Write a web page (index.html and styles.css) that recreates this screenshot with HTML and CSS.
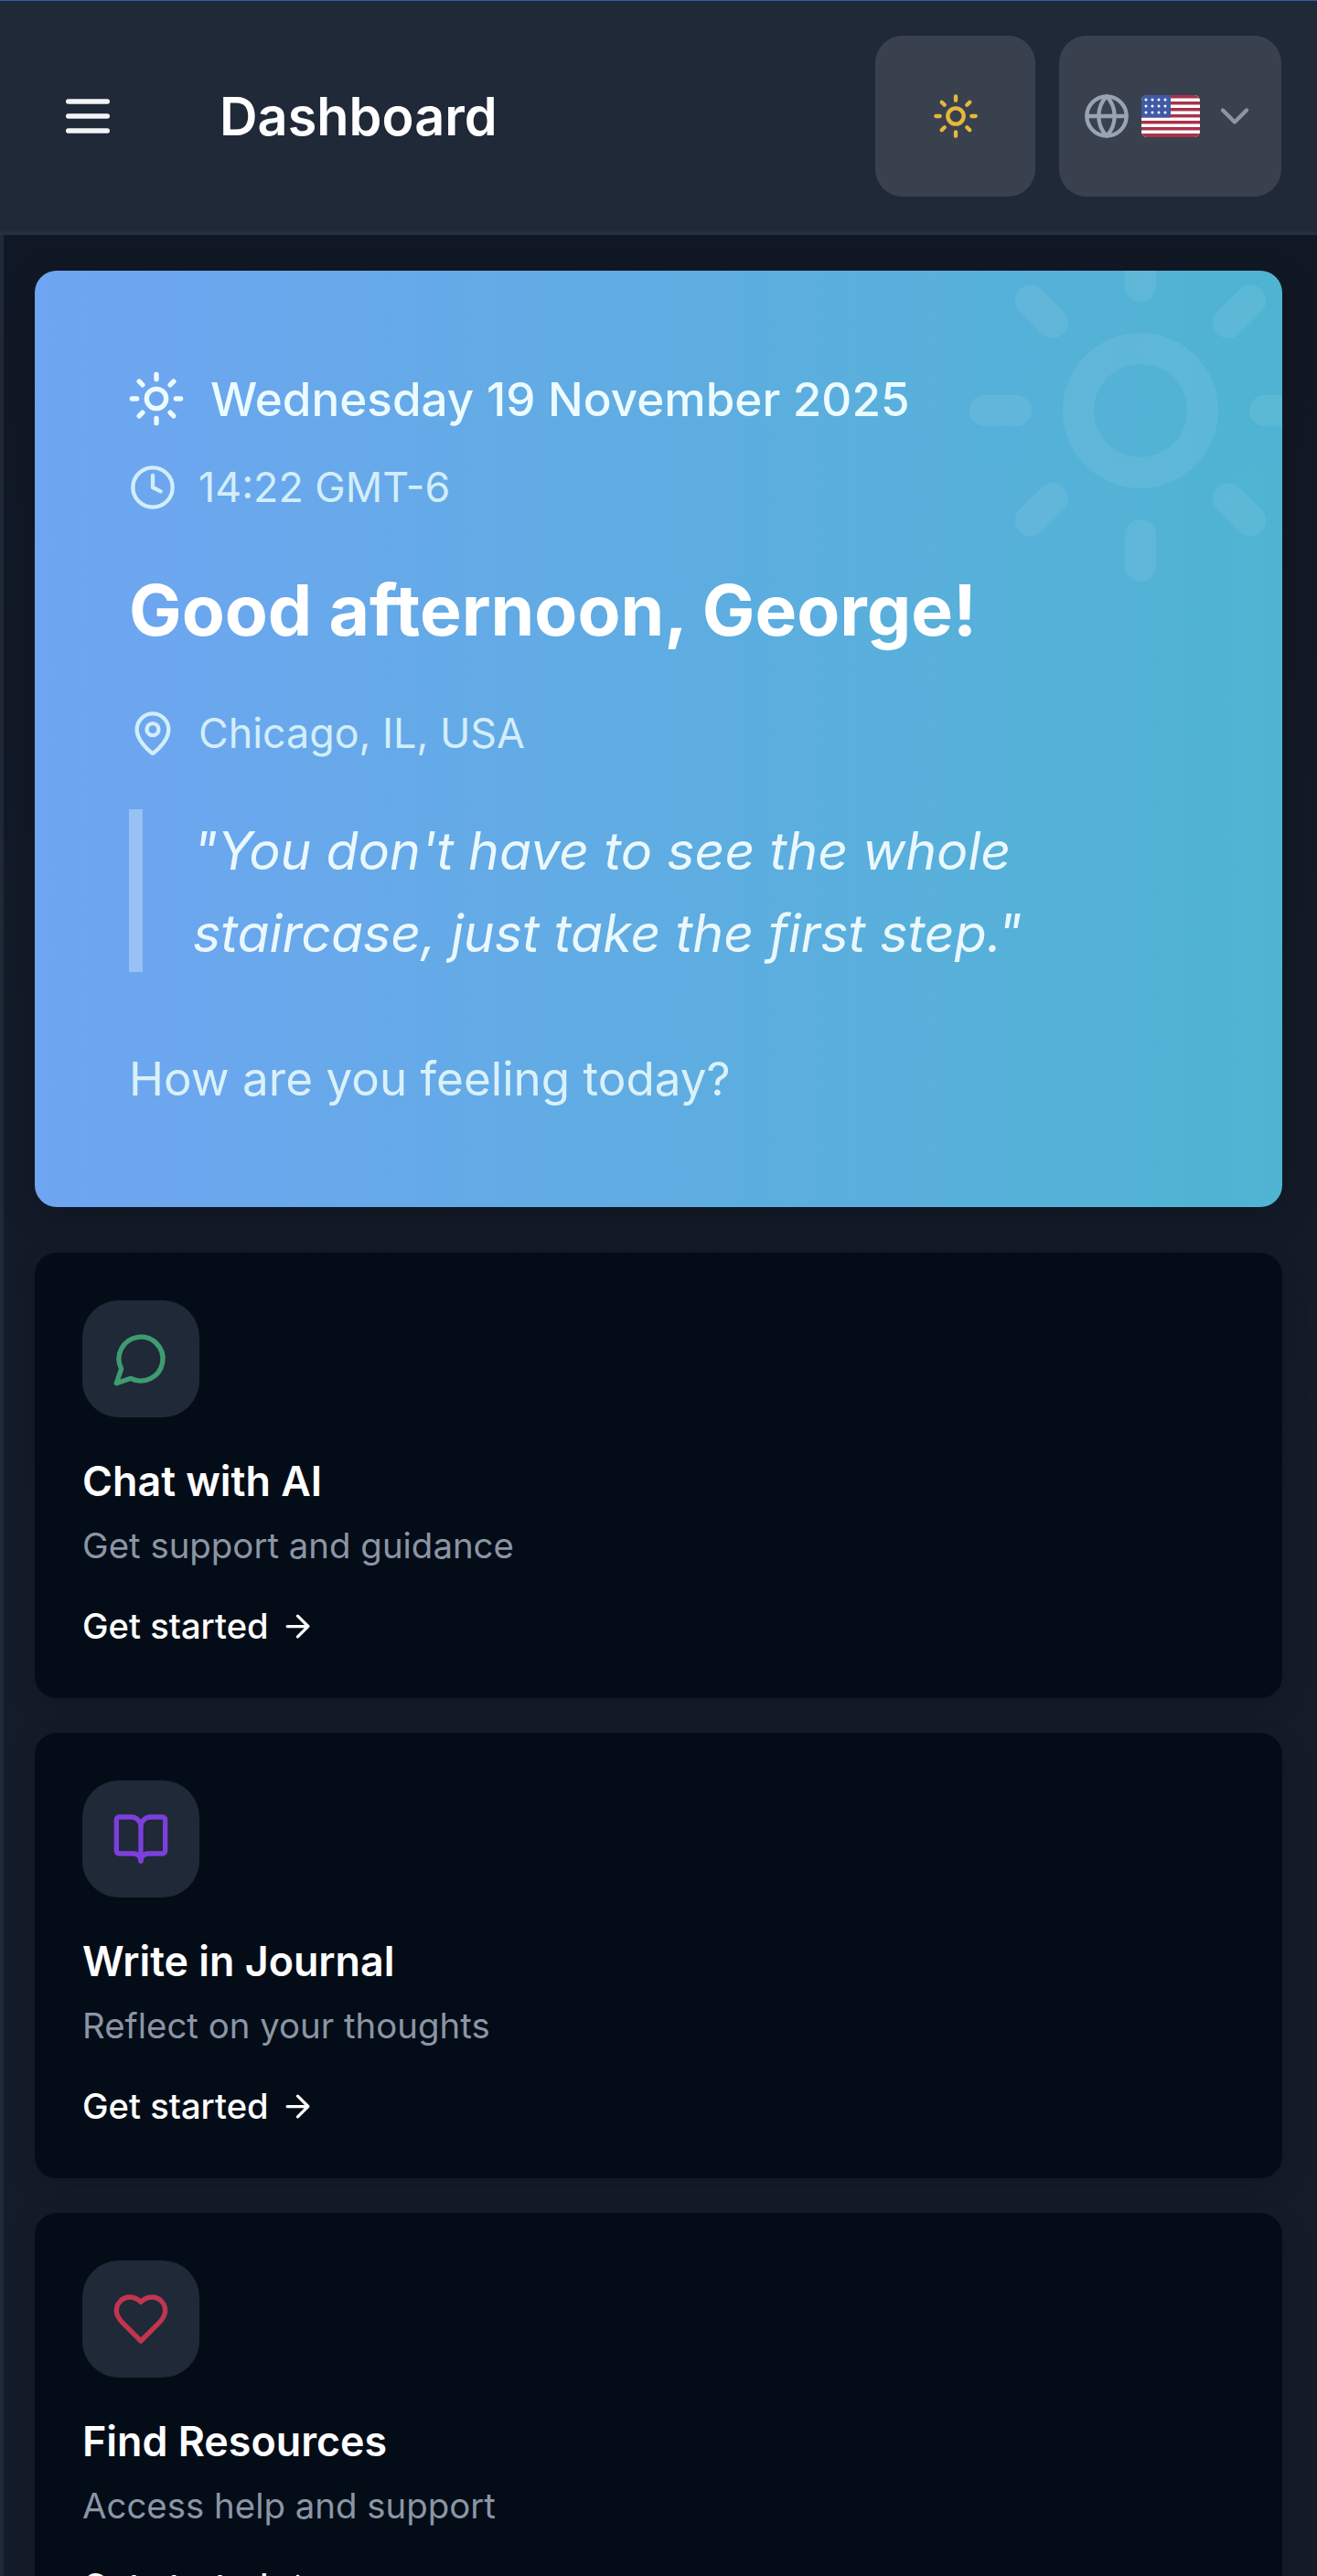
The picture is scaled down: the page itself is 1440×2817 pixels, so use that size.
FILE: index.html
```html
<!DOCTYPE html>
<html>
<head>
    <title>Dashboard</title>
    <link rel="stylesheet" href="styles.css">
</head>
<body>
    <div class="topline"></div>
    <div class="header">
        <button class="menu-btn">
            <svg class="ico-menu" viewBox="0 0 24 24"><path d="M4 6h16M4 12h16M4 18h16"/></svg>
        </button>
        <h1>Dashboard</h1>
        <div class="header-actions">
            <button class="tool-btn theme-btn">
                <svg class="ico-52 sun-yellow" viewBox="0 0 24 24"><circle cx="12" cy="12" r="4"/><path d="M12 2v2M12 20v2M4.93 4.93l1.41 1.41M17.66 17.66l1.41 1.41M2 12h2M20 12h2M6.34 17.66l-1.41 1.41M19.07 4.93l-1.41 1.41"/></svg>
            </button>
            <button class="tool-btn lang-btn">
                <svg class="ico-52 gray" viewBox="0 0 24 24"><circle cx="12" cy="12" r="10"/><path d="M12 2a14.5 14.5 0 0 0 0 20 14.5 14.5 0 0 0 0-20"/><path d="M2 12h20"/></svg>
                <svg class="flag" viewBox="0 0 64 46">
                    <rect width="64" height="46" fill="#fff"/>
                    <g fill="#a8324a">
                        <rect width="64" height="3.5"/>
                        <rect y="7" width="64" height="3.5"/>
                        <rect y="14" width="64" height="3.5"/>
                        <rect y="21" width="64" height="3.5"/>
                        <rect y="28" width="64" height="3.5"/>
                        <rect y="35" width="64" height="3.5"/>
                        <rect y="42" width="64" height="4"/>
                    </g>
                    <rect width="32" height="24.5" fill="#3f5aa6"/>
                    <g fill="#fff">
                        <circle cx="5" cy="5" r="1.5"/><circle cx="12" cy="5" r="1.5"/><circle cx="19" cy="5" r="1.5"/><circle cx="26" cy="5" r="1.5"/>
                        <circle cx="5" cy="12" r="1.5"/><circle cx="12" cy="12" r="1.5"/><circle cx="19" cy="12" r="1.5"/><circle cx="26" cy="12" r="1.5"/>
                        <circle cx="5" cy="19" r="1.5"/><circle cx="12" cy="19" r="1.5"/><circle cx="19" cy="19" r="1.5"/><circle cx="26" cy="19" r="1.5"/>
                    </g>
                </svg>
                <svg class="ico-52 chevron" viewBox="0 0 24 24"><path d="M6 9l6 6 6-6"/></svg>
            </button>
        </div>
    </div>

    <div class="main">
        <div class="hero">
            <svg class="hero-sun" viewBox="0 0 24 24"><circle cx="12" cy="12" r="4"/><path d="M12 2v2M12 20v2M4.93 4.93l1.41 1.41M17.66 17.66l1.41 1.41M2 12h2M20 12h2M6.34 17.66l-1.41 1.41M19.07 4.93l-1.41 1.41"/></svg>
            <div class="hero-date">
                <svg class="ico-64" viewBox="0 0 24 24"><circle cx="12" cy="12" r="4"/><path d="M12 2v2M12 20v2M4.93 4.93l1.41 1.41M17.66 17.66l1.41 1.41M2 12h2M20 12h2M6.34 17.66l-1.41 1.41M19.07 4.93l-1.41 1.41"/></svg>
                <span>Wednesday 19 November 2025</span>
            </div>
            <div class="hero-meta hero-time">
                <svg class="ico-52" viewBox="0 0 24 24"><circle cx="12" cy="12" r="10"/><path d="M12 6v6l4 2"/></svg>
                <span>14:22 GMT-6</span>
            </div>
            <h2>Good afternoon, George!</h2>
            <div class="hero-meta hero-place">
                <svg class="ico-52" viewBox="0 0 24 24"><path d="M20 10c0 4.993-5.539 10.193-7.399 11.799a1 1 0 0 1-1.202 0C9.539 20.193 4 14.993 4 10a8 8 0 0 1 16 0"/><circle cx="12" cy="10" r="3"/></svg>
                <span>Chicago, IL, USA</span>
            </div>
            <div class="quote">"You don't have to see the whole staircase, just take the first step."</div>
            <div class="feeling">How are you feeling today?</div>
        </div>

        <div class="card">
            <div class="card-icon">
                <svg class="ico-64 green" viewBox="0 0 24 24"><path d="M7.9 20A9 9 0 1 0 4 16.1L2 22Z"/></svg>
            </div>
            <h3>Chat with AI</h3>
            <p>Get support and guidance</p>
            <div class="card-link">Get started <svg class="ico-arrow" viewBox="0 0 24 24"><path d="M5 12h14M12 5l7 7-7 7"/></svg></div>
        </div>

        <div class="card">
            <div class="card-icon">
                <svg class="ico-64 purple" viewBox="0 0 24 24"><path d="M12 7v14"/><path d="M3 18a1 1 0 0 1-1-1V4a1 1 0 0 1 1-1h5a4 4 0 0 1 4 4 4 4 0 0 1 4-4h5a1 1 0 0 1 1 1v13a1 1 0 0 1-1 1h-6a3 3 0 0 0-3 3 3 3 0 0 0-3-3z"/></svg>
            </div>
            <h3>Write in Journal</h3>
            <p>Reflect on your thoughts</p>
            <div class="card-link">Get started <svg class="ico-arrow" viewBox="0 0 24 24"><path d="M5 12h14M12 5l7 7-7 7"/></svg></div>
        </div>

        <div class="card">
            <div class="card-icon">
                <svg class="ico-64 red" viewBox="0 0 24 24"><path d="M19 14c1.49-1.46 3-3.21 3-5.5A5.5 5.5 0 0 0 16.5 3c-1.76 0-3 .5-4.5 2-1.5-1.5-2.74-2-4.5-2A5.5 5.5 0 0 0 2 8.5c0 2.3 1.5 4.05 3 5.5l7 7Z"/></svg>
            </div>
            <h3>Find Resources</h3>
            <p>Access help and support</p>
            <div class="card-link">Get started <svg class="ico-arrow" viewBox="0 0 24 24"><path d="M5 12h14M12 5l7 7-7 7"/></svg></div>
        </div>
    </div>
</body>
</html>
```

FILE: styles.css
```css
html, body {
    margin: 0;
    padding: 0;
    height: 2817px;
    overflow: hidden;
}

body {
    font-family: 'Inter', 'Liberation Sans', sans-serif;
    background: #141c2a;
    color: white;
}

svg {
    fill: none;
    stroke: currentColor;
    stroke-width: 2;
    stroke-linecap: round;
    stroke-linejoin: round;
    flex-shrink: 0;
    display: block;
}

.topline {
    height: 1px;
    background: #3b5ba8;
}

.header {
    height: 252px;
    display: flex;
    align-items: center;
    padding: 0 39px 0 64px;
    background: #1f2937;
    border-bottom: 4px solid #262f3d;
}

.header h1 {
    margin: 0 0 0 112px;
    font-size: 57.6px;
    font-weight: 600;
    color: white;
}

.menu-btn {
    background: none;
    border: none;
    padding: 0;
    color: #f3f4f6;
}

.ico-menu {
    width: 64px;
    height: 64px;
}

.header-actions {
    margin-left: auto;
    display: flex;
    gap: 26px;
}

.tool-btn {
    height: 176px;
    background: #3a414e;
    border: none;
    border-radius: 30px;
    display: flex;
    align-items: center;
    justify-content: center;
}

.theme-btn {
    width: 175px;
    color: #e3b93c;
}

.lang-btn {
    width: 243px;
    gap: 12px;
    padding: 0;
}

.ico-52 {
    width: 52px;
    height: 52px;
}

.ico-64 {
    width: 64px;
    height: 64px;
}

.gray {
    color: #98a3b3;
}

.chevron {
    color: #8b95a3;
}

.flag {
    width: 64px;
    height: 46px;
    border-radius: 6px;
    stroke: none;
}

.flag * {
    stroke: none;
}

.main {
    border-left: 4px solid #1f2937;
    padding: 39px 38px 0 34px;
    background: linear-gradient(#111825, #141c2a 1400px);
    height: 2600px;
}

.hero {
    position: relative;
    overflow: hidden;
    height: 1024px;
    box-sizing: border-box;
    padding: 104px 104px 0 103px;
    border-radius: 24px;
    background: linear-gradient(to right, #6fa5f2, #4fb4d2);
    box-shadow: 0 12px 40px rgba(0,0,0,0.2);
    margin-bottom: 50px;
}

.hero-sun {
    position: absolute;
    top: -51px;
    right: -49px;
    width: 408px;
    height: 408px;
    color: white;
    opacity: 0.07;
}

.hero-date {
    display: flex;
    align-items: center;
    gap: 27px;
    font-size: 51.2px;
    font-weight: 500;
    color: #ecfbff;
    height: 72px;
    margin-left: -2px;
}

.hero-meta {
    display: flex;
    align-items: center;
    gap: 24px;
    font-size: 44.8px;
    color: #d3eefb;
}

.hero-time {
    margin-top: 33px;
    height: 56px;
}

.hero h2 {
    margin: 57px 0 0 0;
    font-size: 76.8px;
    font-weight: 700;
    line-height: 100px;
    color: white;
}

.hero-place {
    margin-top: 56px;
    height: 56px;
}

.quote {
    margin-top: 55px;
    border-left: 15px solid rgba(255,255,255,0.3);
    padding-left: 55px;
    height: 178px;
    font-size: 57.3px;
    font-style: italic;
    line-height: 90px;
    color: #eaf8fd;
    margin-right: 100px;
}

.feeling {
    margin-top: 85px;
    font-size: 51.2px;
    color: #d9f1fa;
}

.card {
    height: 487px;
    box-sizing: border-box;
    padding: 52px;
    background: #040c17;
    border-radius: 24px;
    box-shadow: 0 8px 30px rgba(0,0,0,0.15);
    margin-bottom: 38px;
}

.card-icon {
    width: 128px;
    height: 128px;
    border-radius: 40px;
    background: #1f2937;
    display: flex;
    align-items: center;
    justify-content: center;
}

.green { color: #3f9b70; }
.purple { color: #7c3fdc; }
.red { color: #c0354f; }

.card h3 {
    margin: 40px 0 0 0;
    font-size: 44.8px;
    font-weight: 600;
    line-height: 60px;
}

.card p {
    margin: 12px 0 0 0;
    font-size: 38.4px;
    line-height: 56px;
    color: #8b95a5;
}

.card-link {
    margin-top: 37px;
    display: flex;
    align-items: center;
    gap: 12px;
    font-size: 38.2px;
    font-weight: 500;
}

.ico-arrow {
    width: 39px;
    height: 39px;
}
```
